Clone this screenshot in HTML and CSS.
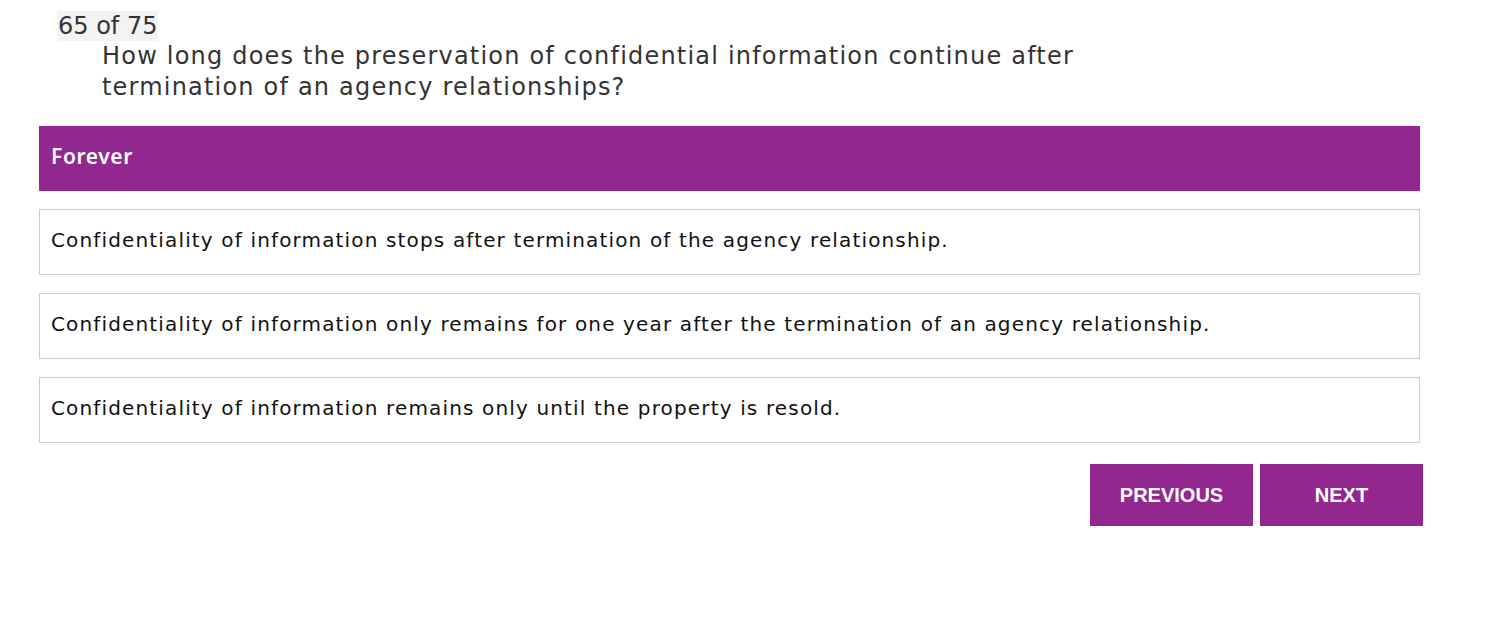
FILE: index.html
```html
<!DOCTYPE html>
<html>
<head>
<meta charset="utf-8">
<link rel="stylesheet" href="styles.css">
</head>
<body>
<div class="quiz">
  <div class="counter"><span class="count">65 of 75</span></div>
  <div class="question">How long does the preservation of confidential information continue after termination of an agency relationships?</div>
  <div class="options">
    <div class="option selected">Forever</div>
    <div class="option">Confidentiality of information stops after termination of the agency relationship.</div>
    <div class="option">Confidentiality of information only remains for one year after the termination of an agency relationship.</div>
    <div class="option">Confidentiality of information remains only until the property is resold.</div>
  </div>
  <div class="nav">
    <button class="btn">PREVIOUS</button>
    <button class="btn">NEXT</button>
  </div>
</div>
</body>
</html>
```
FILE: styles.css
```css
html, body {
  margin: 0;
  padding: 0;
  background: #fff;
}
body {
  font-family: "DejaVu Sans", "Noto Sans", sans-serif;
  color: #222;
}
.quiz {
  padding: 11px 0 0 39px;
  width: 1381px;
}
.counter {
  padding-left: 18px;
  height: 30px;
}
.count {
  display: inline-block;
  background: #f3f3f3;
  font-size: 24px;
  line-height: 30px;
  color: #333;
  padding: 0 1px;
}
.question {
  margin-left: 63px;
  width: 1040px;
  font-size: 24px;
  line-height: 31px;
  color: #333;
  margin-bottom: 23px;
  letter-spacing: 1.2px;
}
.options {
  display: flex;
  flex-direction: column;
  gap: 18px;
}
.option {
  border: 1px solid #ccc;
  display: flex;
  align-items: center;
  padding: 0 11px 5px;
  font-size: 20px;
  letter-spacing: 1.15px;
  color: #111;
  box-sizing: border-box;
  height: 66px;
}
.option.selected {
  background: #92278f;
  border-color: #92278f;
  color: #fff;
  height: 65px;
  font-family: "Noto Sans", sans-serif;
  font-size: 21px;
  font-weight: 600;
  letter-spacing: 0.6px;
}
.nav {
  display: flex;
  justify-content: flex-end;
  gap: 7px;
  margin-top: 21px;
  margin-right: -3px;
}
.btn {
  width: 163px;
  height: 62px;
  background: #92278f;
  color: #fff;
  border: none;
  font-family: "Liberation Sans", Arial, sans-serif;
  font-weight: bold;
  font-size: 20px;
  padding: 0;
}
```
